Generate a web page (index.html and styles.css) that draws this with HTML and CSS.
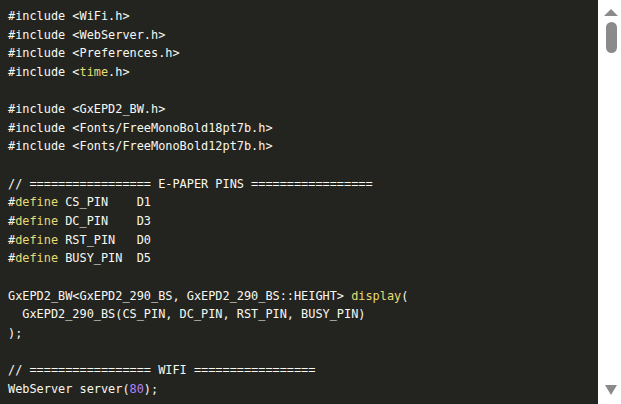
FILE: index.html
```html
<!DOCTYPE html>
<html>
<head>
<meta charset="utf-8">
<link rel="stylesheet" href="styles.css">
</head>
<body>
<div class="frame">
<div class="code">
<div class="line">#include &lt;WiFi.h&gt;</div>
<div class="line">#include &lt;WebServer.h&gt;</div>
<div class="line">#include &lt;Preferences.h&gt;</div>
<div class="line">#include &lt;<span class="kw">time</span>.h&gt;</div>
<div class="line"></div>
<div class="line">#include &lt;GxEPD2_BW.h&gt;</div>
<div class="line">#include &lt;Fonts/FreeMonoBold18pt7b.h&gt;</div>
<div class="line">#include &lt;Fonts/FreeMonoBold12pt7b.h&gt;</div>
<div class="line"></div>
<div class="line">// ================= E-PAPER PINS =================</div>
<div class="line">#<span class="kw">define</span> CS_PIN    D1</div>
<div class="line">#<span class="kw">define</span> DC_PIN    D3</div>
<div class="line">#<span class="kw">define</span> RST_PIN   D0</div>
<div class="line">#<span class="kw">define</span> BUSY_PIN  D5</div>
<div class="line"></div>
<div class="line">GxEPD2_BW&lt;GxEPD2_290_BS, GxEPD2_290_BS::HEIGHT&gt; <span class="kw">display</span>(</div>
<div class="line">  GxEPD2_290_BS(CS_PIN, DC_PIN, RST_PIN, BUSY_PIN)</div>
<div class="line">);</div>
<div class="line"></div>
<div class="line">// ================= WIFI =================</div>
<div class="line">WebServer server(<span class="num">80</span>);</div>
</div>
<div class="scrollbar">
<div class="arrow up"></div>
<div class="track"><div class="thumb"></div></div>
<div class="arrow down"></div>
</div>
</div>
</body>
</html>
```
FILE: styles.css
```css
html, body {
  margin: 0;
  padding: 0;
  background: #ffffff;
  overflow: hidden;
}
.frame {
  display: flex;
  width: 621px;
  height: 404px;
}
.code {
  width: 598px;
  height: 404px;
  box-sizing: border-box;
  margin: 0;
  padding: 7px 8px 0;
  background: #23241f;
  color: #f8f8f2;
  font-family: "DejaVu Sans Mono", monospace;
  font-size: 11.88px;
  line-height: 18.65px;
  overflow: hidden;
}
.line {
  white-space: pre;
  height: 18.65px;
}
.kw { color: #e6db74; }
.num { color: #ae81ff; }
.scrollbar {
  flex: 1;
  display: flex;
  flex-direction: column;
  align-items: center;
  padding: 9px 0 9px 3px;
  box-sizing: border-box;
  background: #ffffff;
}
.arrow {
  width: 0;
  height: 0;
  border-left: 7px solid transparent;
  border-right: 7px solid transparent;
}
.arrow.up { border-bottom: 7px solid #8a8a8a; }
.arrow.down { border-top: 10px solid #8a8a8a; border-left-width: 6px; border-right-width: 6px; }
.track {
  flex: 1;
  display: flex;
  flex-direction: column;
  align-items: center;
  padding-top: 6px;
}
.thumb {
  width: 11px;
  height: 31px;
  border-radius: 6px;
  background: #8a8a8a;
}
```
